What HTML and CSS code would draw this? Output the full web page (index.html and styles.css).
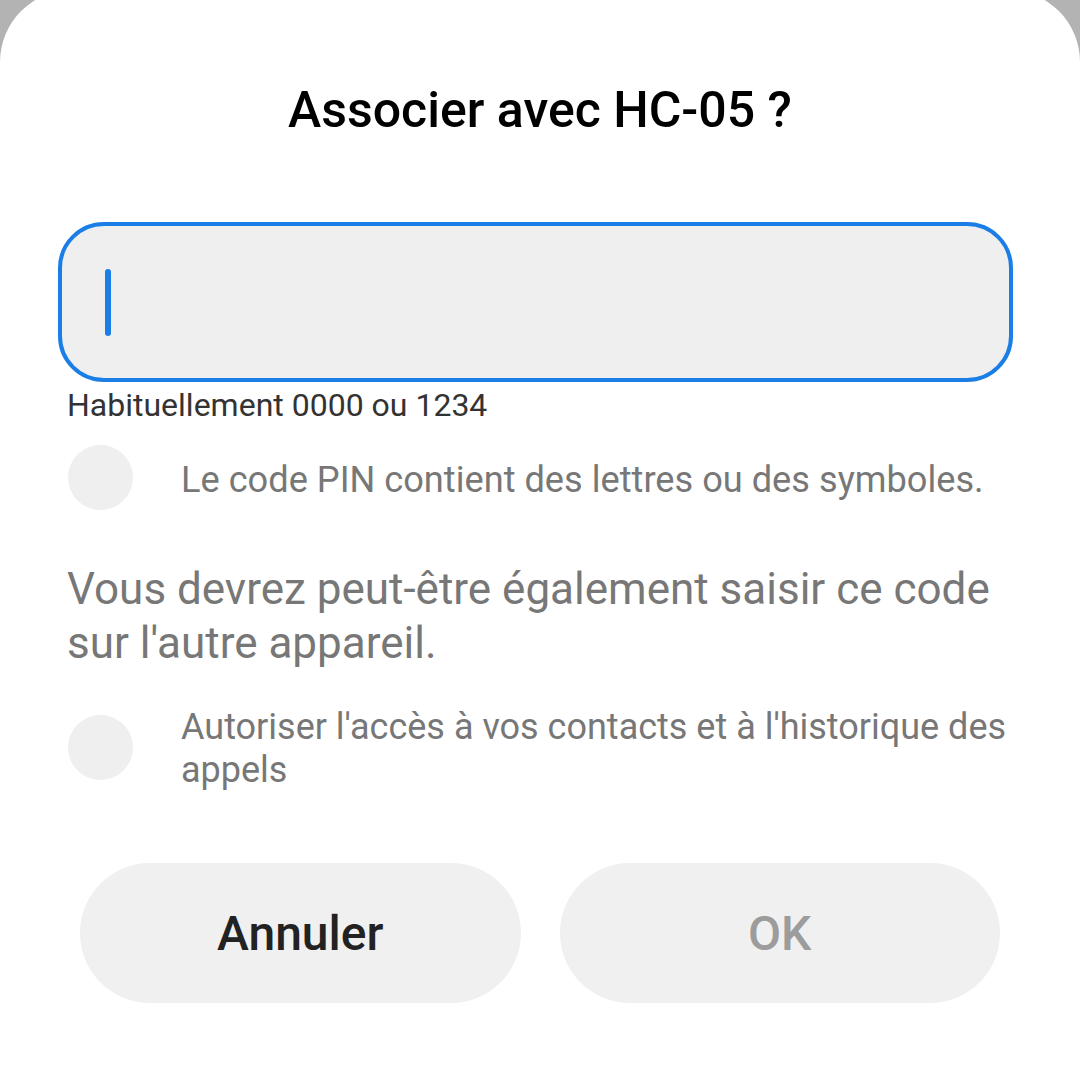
FILE: index.html
```html
<!DOCTYPE html>
<html lang="fr">
<head>
<meta charset="utf-8">
<title>Associer avec HC-05 ?</title>
<link rel="stylesheet" href="styles.css">
</head>
<body>
<div class="dialog">
  <h1 class="title">Associer avec HC-05 ?</h1>
  <div class="input"><span class="cursor"></span></div>
  <p class="hint">Habituellement 0000 ou 1234</p>
  <div class="option option-one">
    <span class="radio"></span>
    <span class="option-text">Le code PIN contient des lettres ou des symboles.</span>
  </div>
  <p class="note">Vous devrez peut-être également saisir ce code sur l'autre appareil.</p>
  <div class="option option-two">
    <span class="radio"></span>
    <span class="option-text">Autoriser l'accès à vos contacts et à l'historique des appels</span>
  </div>
  <div class="buttons">
    <button class="btn btn-cancel">Annuler</button>
    <button class="btn btn-ok">OK</button>
  </div>
</div>
</body>
</html>
```
FILE: styles.css
```css
html, body {
  margin: 0;
  padding: 0;
  background: #b3b3b3;
  height: 1080px;
  overflow: hidden;
  font-family: Roboto, "Noto Sans", "Liberation Sans", sans-serif;
}
.dialog {
  margin-top: -10px;
  height: 1100px;
  background: #ffffff;
  border-radius: 72px 72px 0 0;
  padding: 90px 0 0 0;
  box-sizing: border-box;
}
.title {
  margin: 0;
  text-align: center;
  font-size: 50px;
  line-height: 60px;
  font-weight: 500;
  color: #000;
}
.input {
  margin: 82px 67px 0 58px;
  height: 152px;
  border: 4px solid #1b7ee6;
  border-radius: 46px;
  background: #efefef;
  display: flex;
  align-items: center;
  padding-left: 43px;
}
.cursor {
  width: 6px;
  height: 67px;
  border-radius: 3px;
  background: #1b7ee6;
}
.hint {
  margin: 3px 0 0 67px;
  font-size: 32px;
  line-height: 40px;
  color: #333;
}
.option {
  display: flex;
  align-items: flex-start;
  padding-left: 68px;
}
.option-one {
  margin-top: 20px;
  align-items: center;
}
.option-one .option-text {
  font-size: 36.2px;
  padding-top: 3px;
}
.radio {
  flex: none;
  width: 65px;
  height: 65px;
  border-radius: 50%;
  background: #efefef;
}
.option-text {
  margin-left: 48px;
  font-size: 36px;
  line-height: 43px;
  color: #777;
  padding-right: 40px;
}
.note {
  margin: 52px 70px 0 67px;
  font-size: 44px;
  line-height: 54px;
  color: #777;
}
.option-two {
  margin-top: 36px;
}
.option-two .radio {
  margin-top: 9px;
}
.buttons {
  display: flex;
  gap: 39px;
  margin: 71px 80px 0 80px;
}
.btn {
  flex: 1;
  height: 140px;
  border: none;
  border-radius: 70px;
  background: #f0f0f0;
  font-family: Roboto, "Noto Sans", "Liberation Sans", sans-serif;
  font-size: 48px;
  font-weight: 500;
  padding: 0;
}
.btn-cancel { color: #222; }
.btn-ok { color: #9c9c9c; }
```
